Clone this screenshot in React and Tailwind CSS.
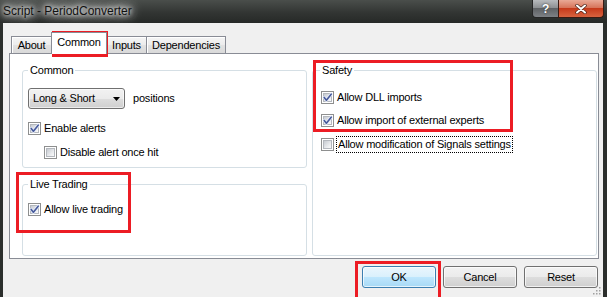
import React from 'react'

const redBox = 'pointer-events-none absolute border-[3px] border-[#ec1c24]'

function CheckBox({ checked }) {
  return (
    <span className="relative flex h-[13px] w-[13px] shrink-0 border border-[#8e8f8f] bg-white p-px">
      <span className="flex-1 border border-[#b4b8be] bg-[linear-gradient(135deg,#c6cad0_0%,#e8eaed_60%,#fafafa_100%)]" />
      {checked && (
        <svg viewBox="0 0 13 13" className="absolute -left-px -top-px h-[13px] w-[13px]">
          <path d="M3.2 6.4 L5.4 9.2 L10.2 3.2" fill="none" stroke="#e6ecfa" strokeWidth="3" strokeLinecap="round" strokeLinejoin="round" />
          <path d="M3.2 6.4 L5.4 9.2 L10.2 3.2" fill="none" stroke="#46599a" strokeWidth="1.6" strokeLinecap="round" strokeLinejoin="round" />
        </svg>
      )}
    </span>
  )
}

function CheckRow({ checked, children, className = '', focus }) {
  return (
    <div className={`flex items-center ${focus ? 'gap-[2px]' : 'gap-[3px]'} ${className}`}>
      <CheckBox checked={checked} />
      {focus ? (
        <span className="border border-dotted border-black px-px leading-[15px]">{children}</span>
      ) : (
        <span className="leading-[13px]">{children}</span>
      )}
    </div>
  )
}

function Tab({ children, className = '' }) {
  return (
    <div className={`-ml-px flex h-[17px] items-center justify-center border border-b-0 border-[#898c95] bg-[linear-gradient(#f5f5f5_0%,#ececec_50%,#e2e2e2_51%,#d9d9d9_100%)] shadow-[inset_1px_1px_0_#fff] ${className}`}>
      {children}
    </div>
  )
}

function Button({ children, primary }) {
  const look = primary
    ? 'border-[#3c7fb1] bg-[linear-gradient(#eaf6fd_0%,#d9f0fc_50%,#bee6fd_51%,#a7d9f5_100%)]'
    : 'border-[#707070] bg-[linear-gradient(#f2f2f2_0%,#ebebeb_50%,#dddddd_51%,#cfcfcf_100%)]'
  return (
    <div className={`flex h-[22px] w-[74px] items-center justify-center rounded-[3px] border shadow-[inset_0_0_0_1px_rgba(255,255,255,0.7)] ${look}`}>
      {children}
    </div>
  )
}

export default function App() {
  return (
    <div className="relative flex h-[297px] w-[607px] flex-col overflow-hidden bg-[#2b2e2c] font-['Liberation_Sans',Arial,sans-serif] text-[11px] tracking-[-0.2px] text-black">
      {/* title bar */}
      <div className="flex h-[23px] shrink-0 items-start bg-[linear-gradient(180deg,#4a4e4b_0%,#323533_55%,#262927_100%)]">
        <span className="pl-[3px] pt-[4px] text-[12px] leading-[15px] tracking-normal text-[#111] [text-shadow:0_0_4px_#fff,0_0_8px_#fff,0_0_12px_#e6e6e6,0_0_16px_#cfcfcf]">
          Script - PeriodConverter
        </span>
        <div className="ml-auto mr-[3px] flex">
          <div className="flex h-[18px] w-[27px] items-center justify-center rounded-bl-[4px] border border-t-0 border-[#262626] bg-[linear-gradient(#b7babd_0%,#8d9093_45%,#5f6265_50%,#7d8185_100%)] text-[12px] font-bold text-white [text-shadow:0_0_2px_#222]">
            ?
          </div>
          <div className="-ml-px flex h-[18px] w-[46px] items-center justify-center rounded-br-[4px] border border-t-0 border-[#3a1a12] bg-[linear-gradient(#e9a996_0%,#d7755b_45%,#c63a1b_50%,#d8633f_100%)]">
            <svg viewBox="0 0 12 10" className="h-[10px] w-[12px]">
              <path d="M2 1.5 L10 8.5 M10 1.5 L2 8.5" stroke="#4a2218" strokeWidth="3.4" strokeLinecap="round" />
              <path d="M2 1.5 L10 8.5 M10 1.5 L2 8.5" stroke="#fff" strokeWidth="2" strokeLinecap="round" />
            </svg>
          </div>
        </div>
      </div>

      {/* client area */}
      <div className="ml-[3px] mr-[4px] flex flex-1 flex-col bg-[#f0f0f0] pl-[6px] pr-[4px]">
        <div className="flex h-[30px] items-end pl-[3px]">
          <Tab className="w-[41px]">About</Tab>
          <div className="relative z-10 -mb-px -ml-px flex h-[22px] w-[56px] justify-center border border-b-0 border-[#898c95] bg-white pt-[3px] leading-[13px]">
            Common
          </div>
          <Tab className="w-[41px]">Inputs</Tab>
          <Tab className="w-[80px]">Dependencies</Tab>
        </div>

        <div className="flex h-[206px] gap-[5px] border border-[#898c95] bg-white pb-[2px] pl-[12px] pr-px pt-[9px]">
          <div className="flex w-[285px] flex-col">
            <fieldset className="h-[105px] rounded-[3px] border border-[#d5dfe5] px-[5px] pt-[11px]">
              <legend className="px-[2px] leading-[14px]">Common</legend>
              <div className="flex items-center">
                <div className="flex h-[21px] w-[97px] items-center rounded-[3px] border border-[#707070] bg-[linear-gradient(#f2f2f2_0%,#ebebeb_50%,#dddddd_51%,#cfcfcf_100%)] pl-[4px] pr-[4px] shadow-[inset_0_0_0_1px_rgba(255,255,255,0.6)]">
                  <span>Long &amp; Short</span>
                  <svg viewBox="0 0 7 4" className="ml-auto h-[4px] w-[7px]">
                    <path d="M0 0 H7 L3.5 4 Z" fill="#000" />
                  </svg>
                </div>
                <span className="ml-[8px]">positions</span>
              </div>
              <CheckRow checked className="mt-[13px]">Enable alerts</CheckRow>
              <CheckRow className="ml-[16px] mt-[11px]">Disable alert once hit</CheckRow>
            </fieldset>

            <fieldset className="mt-[9px] h-[79px] rounded-[3px] border border-[#d5dfe5] px-[5px] pt-[12px]">
              <legend className="px-[2px] leading-[14px]">Live Trading</legend>
              <CheckRow checked>Allow live trading</CheckRow>
            </fieldset>
          </div>

          <fieldset className="h-[193px] w-[285px] rounded-[3px] border border-[#d5dfe5] px-[8px] pt-[14px]">
            <legend className="-ml-px px-[2px] leading-[14px]">Safety</legend>
            <CheckRow checked>Allow DLL imports</CheckRow>
            <CheckRow checked className="mt-[10px]">Allow import of external experts</CheckRow>
            <CheckRow focus className="mt-[9px]">Allow modification of Signals settings</CheckRow>
          </fieldset>
        </div>

        <div className="mr-px mt-[7px] flex justify-end gap-[7px]">
          <Button primary>OK</Button>
          <Button>Cancel</Button>
          <Button>Reset</Button>
        </div>
      </div>

      {/* size grip */}
      <svg viewBox="0 0 9 9" className="absolute bottom-[2px] right-[6px] h-[9px] w-[9px]">
        {[[7, 1], [4, 4], [7, 4], [1, 7], [4, 7], [7, 7]].map(([x, y]) => (
          <rect key={`${x}-${y}`} x={x} y={y} width="1.5" height="1.5" fill="#a0a0a0" />
        ))}
      </svg>

      {/* annotation boxes */}
      <div className={`${redBox} left-[52px] top-[31px] h-[26px] w-[56px]`} />
      <div className={`${redBox} left-[313px] top-[60px] h-[72px] w-[200px]`} />
      <div className={`${redBox} left-[16px] top-[172px] h-[61px] w-[115px]`} />
      <div className={`${redBox} left-[355px] top-[261px] h-[40px] w-[86px]`} />
    </div>
  )
}
